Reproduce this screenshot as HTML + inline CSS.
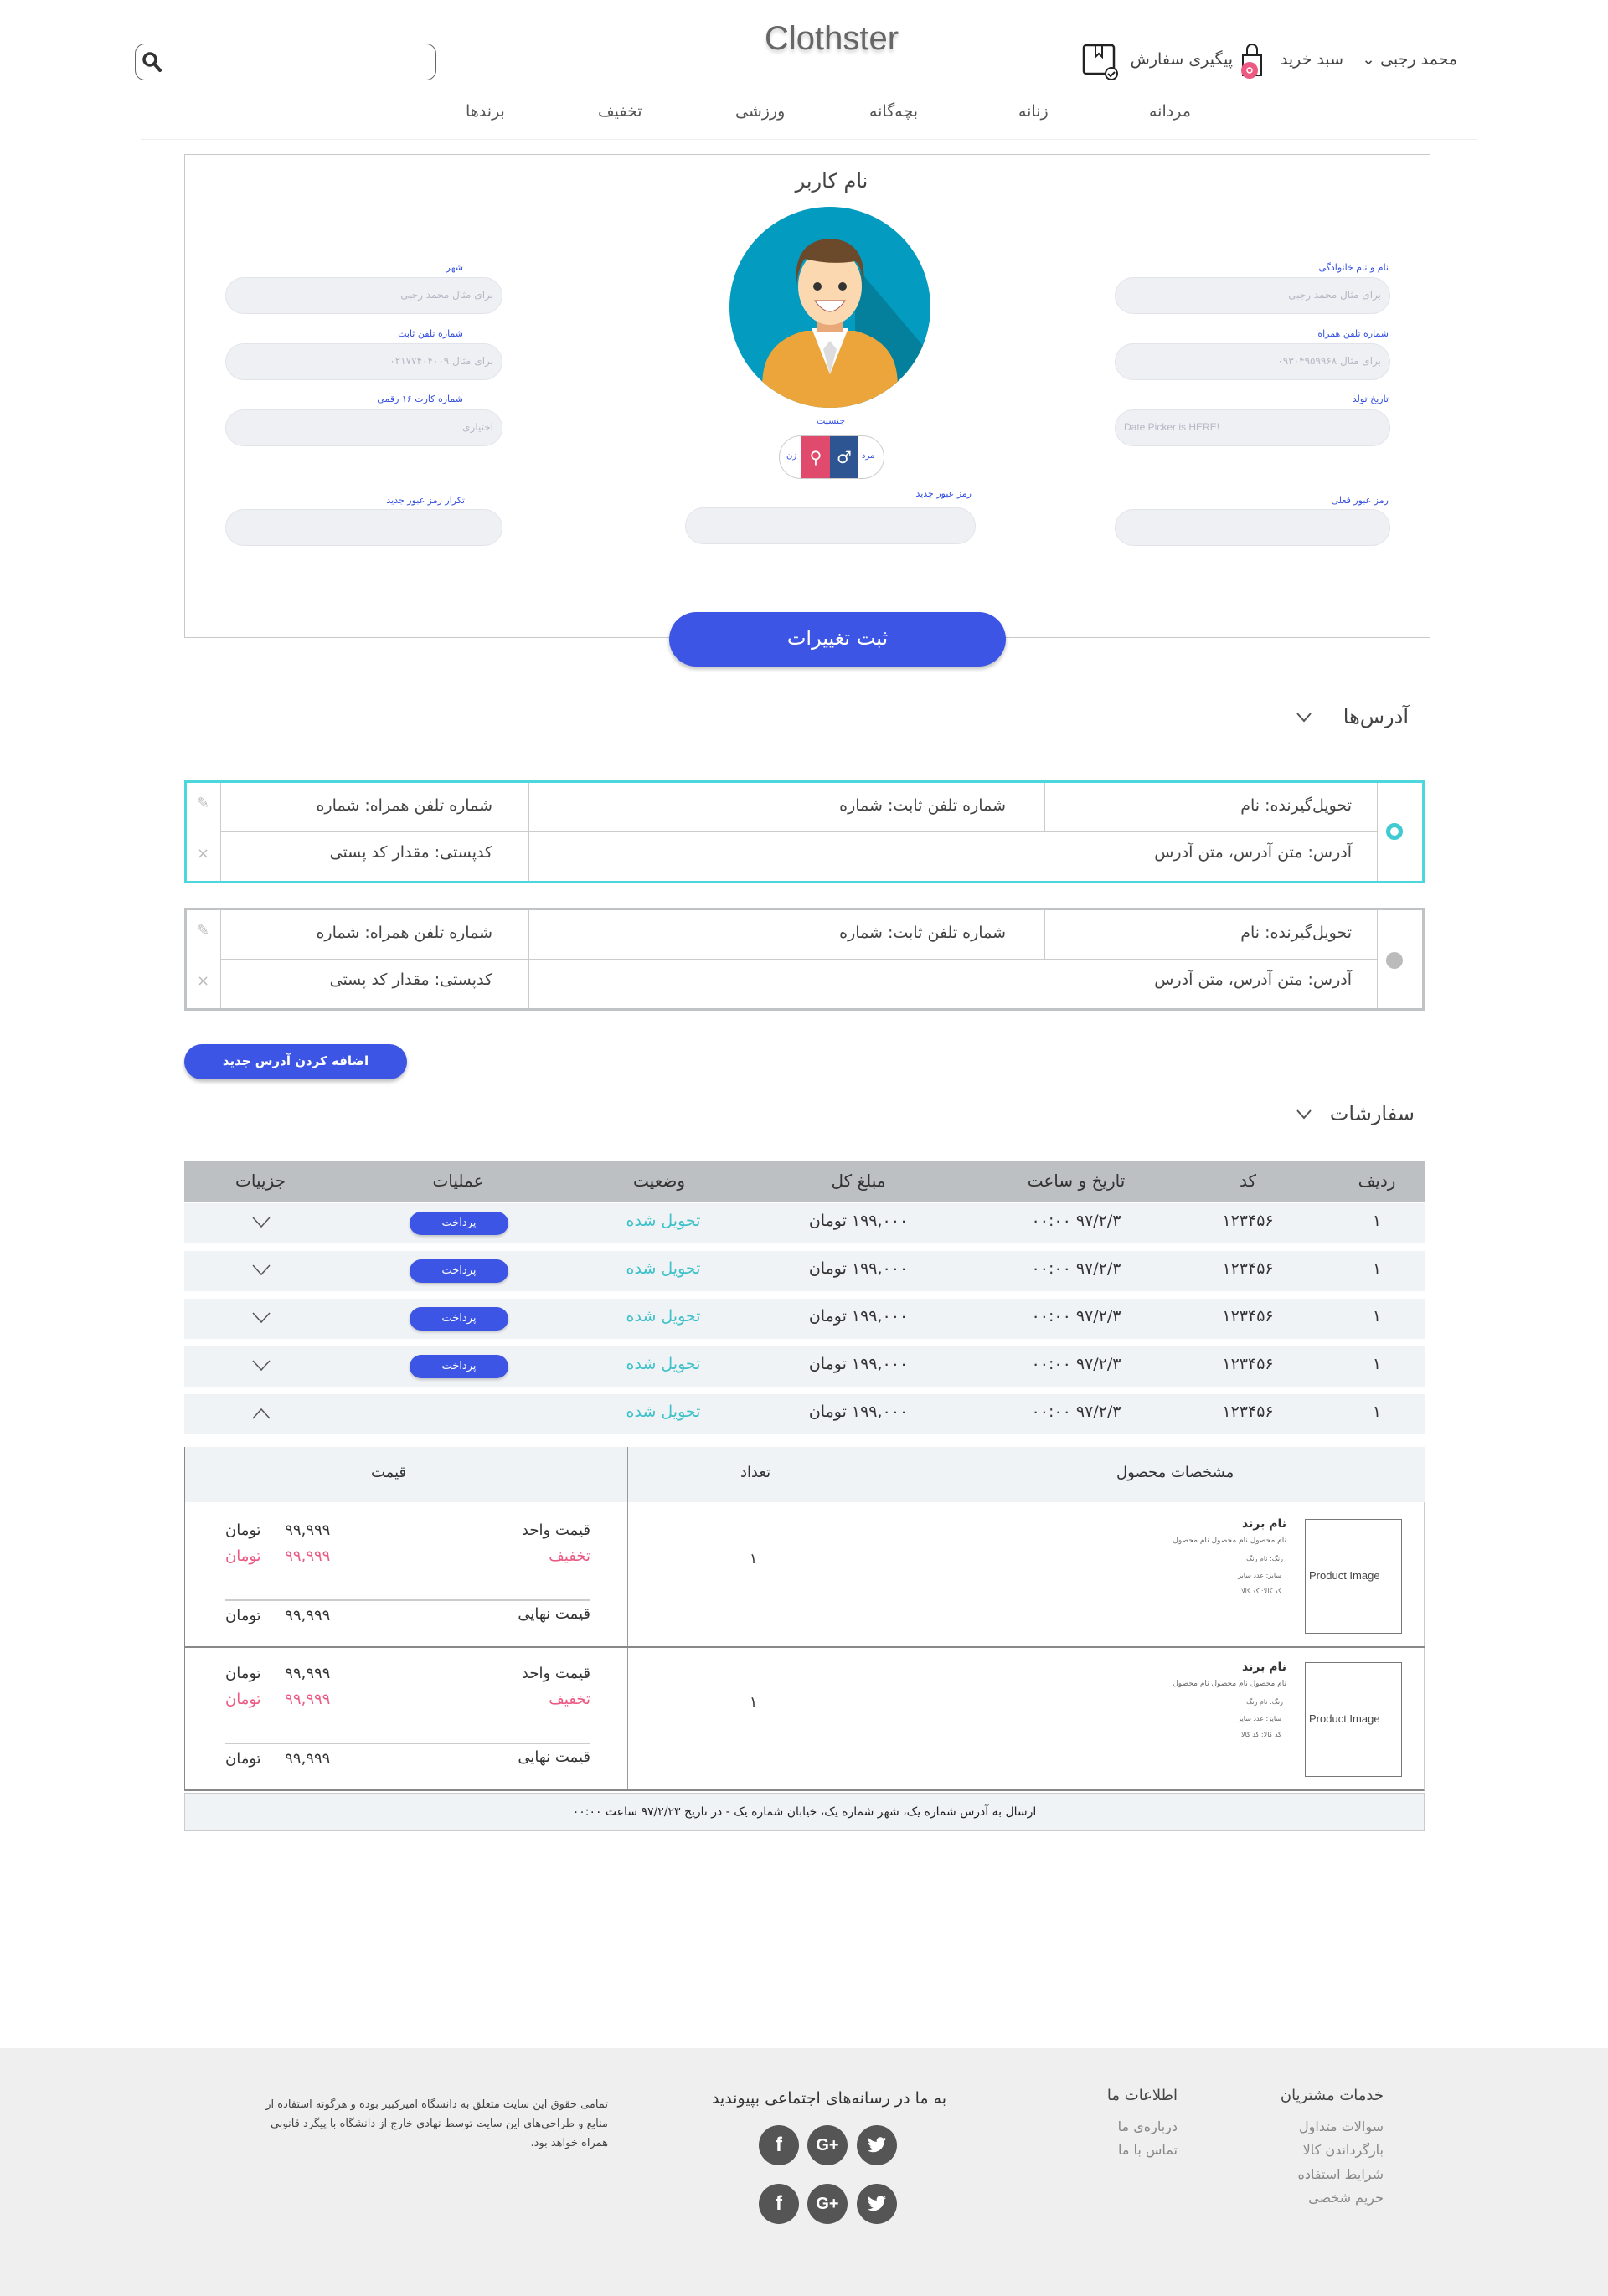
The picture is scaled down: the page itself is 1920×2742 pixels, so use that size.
<!DOCTYPE html>
<html lang="fa"><head><meta charset="utf-8">
<style>
*{box-sizing:border-box;margin:0;padding:0}
body{width:1920px;height:2742px;position:relative;background:#fff;font-family:"DejaVu Sans","Liberation Sans",sans-serif;color:#333;overflow:hidden}
.a{position:absolute}
.t{position:absolute;white-space:nowrap}
.r{direction:rtl}
.inp{position:absolute;height:44px;border:1px solid #e2e4ea;background:#eff0f4;border-radius:22px;font-size:12px;color:#b5b8c4;direction:rtl;padding:13px 10px 0}
.lbl{position:absolute;font-size:11px;color:#3550e0;direction:rtl;white-space:nowrap}
.card{position:absolute;left:220px;width:1481px;height:123px;border:3px solid #4dd6dc;background:#fff}
.card.g{border-color:#bfc3c6}
.card .c{position:absolute;font-size:19px;color:#444;direction:rtl;white-space:nowrap}
.vl{position:absolute;width:1px;background:#ccc}
.hl{position:absolute;height:1px;background:#ccc}
.row{position:absolute;left:220px;width:1481px;height:48px;background:#f0f3f6;font-size:19px;color:#333}
.row .t{top:10px;transform:translateX(-50%)}
.pay{position:absolute;width:118px;height:28px;border-radius:14px;background:#3d55e4;color:#fff;font-size:13px;text-align:center;line-height:28px;top:10px;box-shadow:0 2px 3px rgba(0,0,0,.2)}
.soc{position:absolute;width:48px;height:48px;border-radius:50%;background:#555;color:#fff;font-weight:bold;text-align:center;line-height:48px;font-size:24px;font-family:"Liberation Sans",sans-serif}
.soc svg{position:absolute;left:12px;top:13px}
</style></head><body>

<!-- header -->
<div class="a" style="left:161px;top:52px;width:360px;height:44px;border:1.5px solid #666;border-radius:12px"></div>
<svg class="a" style="left:168px;top:60px" width="28" height="28" viewBox="0 0 28 28"><circle cx="11" cy="11" r="7" fill="none" stroke="#333" stroke-width="3.5"/><line x1="16" y1="16" x2="23" y2="24" stroke="#333" stroke-width="4" stroke-linecap="round"/></svg>
<div class="t" style="left:0;width:1986px;text-align:center;top:24px;font-size:40px;color:#666;font-family:'Liberation Sans',sans-serif;text-shadow:0 3px 4px rgba(0,0,0,.2)">Clothster</div>
<div class="t r" style="right:180px;top:60px;font-size:19px;color:#444">محمد رجبی ⌄</div>
<div class="t r" style="right:316px;top:60px;font-size:19px;color:#444">سبد خرید</div>
<svg class="a" style="left:1478px;top:52px" width="32" height="44" viewBox="0 0 32 44"><rect x="6" y="14" width="22" height="24" fill="none" stroke="#222" stroke-width="2"/><path d="M11 14 V7 a6 6 0 0 1 12 0 V14" fill="none" stroke="#222" stroke-width="2"/><circle cx="14" cy="32" r="10" fill="#ec5a84"/><circle cx="14" cy="32" r="3" fill="none" stroke="#fff" stroke-width="1.5"/></svg>
<div class="t r" style="right:448px;top:60px;font-size:19px;color:#444">پیگیری سفارش</div>
<svg class="a" style="left:1292px;top:52px" width="44" height="44" viewBox="0 0 44 44"><rect x="2" y="2" width="36" height="34" rx="3" fill="none" stroke="#222" stroke-width="2.5"/><path d="M16 2 V16 L20 12 L24 16 V2" fill="none" stroke="#222" stroke-width="2"/><circle cx="35" cy="36" r="7" fill="#fff" stroke="#222" stroke-width="2"/><path d="M31 36 l3 3 l5-5" fill="none" stroke="#222" stroke-width="2"/></svg>

<div class="t r" style="left:1372px;top:122px;font-size:19px;color:#555">مردانه</div>
<div class="t r" style="left:1216px;top:122px;font-size:19px;color:#555">زنانه</div>
<div class="t r" style="left:1038px;top:122px;font-size:19px;color:#555">بچه‌گانه</div>
<div class="t r" style="left:878px;top:122px;font-size:19px;color:#555">ورزشی</div>
<div class="t r" style="left:714px;top:122px;font-size:19px;color:#555">تخفیف</div>
<div class="t r" style="left:556px;top:122px;font-size:19px;color:#555">برندها</div>
<div class="a" style="left:168px;top:166px;width:1595px;height:1px;background:#eee"></div>

<!-- profile box -->
<div class="a" style="left:220px;top:184px;width:1488px;height:578px;border:1.5px solid #c8c8c8"></div>
<div class="t r" style="left:0;width:1986px;text-align:center;top:202px;font-size:24px;color:#444">نام کاربر</div>
<svg class="a" style="left:871px;top:247px" width="240" height="240" viewBox="0 0 240 240">
<defs><clipPath id="cp"><circle cx="120" cy="120" r="120"/></clipPath></defs>
<circle cx="120" cy="120" r="120" fill="#039bbf"/>
<g clip-path="url(#cp)">
<path d="M150 70 L260 200 L240 260 L150 260 Z" fill="#04809c"/>
<path d="M40 200 Q45 160 90 148 L150 148 Q195 160 200 200 L205 250 L35 250 Z" fill="#eca53a"/>
<path d="M98 145 L120 200 L142 145 Z" fill="#fff"/>
<path d="M112 170 L120 200 L128 170 L120 160Z" fill="#ddd"/>
<rect x="105" y="120" width="30" height="30" fill="#e8a878"/>
<ellipse cx="120" cy="95" rx="38" ry="46" fill="#fbd8b0"/>
<path d="M80 95 Q75 40 120 38 Q165 40 160 95 Q158 70 150 65 Q120 70 90 62 Q82 72 80 95Z" fill="#6b4a2b"/>
<circle cx="105" cy="95" r="5" fill="#333"/><circle cx="135" cy="95" r="5" fill="#333"/>
<path d="M102 112 Q120 138 138 112 Z" fill="#fff" stroke="#a55" stroke-width="1"/>
</g></svg>

<div class="lbl" style="right:1367px;top:313px">شهر</div>
<div class="inp" style="left:269px;top:331px;width:331px">برای مثال محمد رجبی</div>
<div class="lbl" style="right:1367px;top:392px">شماره تلفن ثابت</div>
<div class="inp" style="left:269px;top:410px;width:331px">برای مثال ۰۲۱۷۷۴۰۴۰۰۹</div>
<div class="lbl" style="right:1367px;top:470px">شماره کارت ۱۶ رقمی</div>
<div class="inp" style="left:269px;top:489px;width:331px">اختیاری</div>

<div class="lbl" style="right:262px;top:313px">نام و نام خانوادگی</div>
<div class="inp" style="left:1331px;top:331px;width:329px">برای مثال محمد رجبی</div>
<div class="lbl" style="right:262px;top:392px">شماره تلفن همراه</div>
<div class="inp" style="left:1331px;top:410px;width:329px">برای مثال ۰۹۳۰۴۹۵۹۹۶۸</div>
<div class="lbl" style="right:262px;top:470px">تاریخ تولد</div>
<div class="inp" style="left:1331px;top:489px;width:329px;direction:ltr;text-align:left;font-family:'Liberation Sans',sans-serif">Date Picker is HERE!</div>

<div class="lbl" style="left:975px;top:496px">جنسیت</div>
<div class="a" style="left:930px;top:520px;width:126px;height:52px;border:1px solid #ccc;border-radius:26px;background:#fff;overflow:hidden">
<div class="a" style="left:26px;top:0;width:34px;height:52px;background:#e04a6c;color:#fff;text-align:center;line-height:50px;font-size:20px">⚲</div>
<div class="a" style="left:60px;top:0;width:34px;height:52px;background:#2d5592;color:#fff;text-align:center;line-height:50px;font-size:20px">♂</div>
<div class="t" style="left:8px;top:18px;font-size:10px;color:#3550e0">زن</div>
<div class="t" style="left:98px;top:18px;font-size:10px;color:#3550e0">مرد</div>
</div>

<div class="lbl" style="right:1365px;top:591px">تکرار رمز عبور جدید</div>
<div class="inp" style="left:269px;top:608px;width:331px"></div>
<div class="lbl" style="right:760px;top:583px">رمز عبور جدید</div>
<div class="inp" style="left:818px;top:606px;width:347px"></div>
<div class="lbl" style="right:262px;top:591px">رمز عبور فعلی</div>
<div class="inp" style="left:1331px;top:608px;width:329px"></div>

<div class="a r" style="left:799px;top:731px;width:402px;height:65px;border-radius:33px;background:#3d55e4;color:#fff;font-size:24px;text-align:center;line-height:62px;box-shadow:0 3px 5px rgba(0,0,0,.25)">ثبت تغییرات</div>

<!-- addresses -->
<div class="t r" style="right:238px;top:842px;font-size:24px;color:#444">آدرس‌ها</div>
<svg class="a" style="left:1547px;top:850px" width="20" height="14"><path d="M2 2 L10 11 L18 2" fill="none" stroke="#555" stroke-width="2"/></svg>

<div class="card" style="top:932px">
 <div class="vl" style="left:40px;top:0;height:117px"></div>
 <div class="vl" style="left:408px;top:0;height:117px"></div>
 <div class="vl" style="left:1024px;top:0;height:58px"></div>
 <div class="vl" style="left:1421px;top:0;height:117px"></div>
 <div class="hl" style="left:40px;top:58px;width:1381px"></div>
 <div class="a" style="left:1432px;top:48px;width:20px;height:20px;border-radius:50%;border:5px solid #3fcbd1;background:#fff"></div>
 <div class="c" style="right:84px;top:16px">تحویل‌گیرنده: نام</div>
 <div class="c" style="right:84px;top:72px">آدرس: متن آدرس، متن آدرس</div>
 <div class="c" style="right:497px;top:16px">شماره تلفن ثابت: شماره</div>
 <div class="c" style="right:1110px;top:16px">شماره تلفن همراه: شماره</div>
 <div class="c" style="right:1110px;top:72px">کدپستی: مقدار کد پستی</div>
 <div class="t" style="left:12px;top:14px;color:#bbb;font-size:18px">✎</div>
 <div class="t" style="left:12px;top:74px;color:#bbb;font-size:18px">×</div>
</div>
<div class="card g" style="top:1084px">
 <div class="vl" style="left:40px;top:0;height:117px"></div>
 <div class="vl" style="left:408px;top:0;height:117px"></div>
 <div class="vl" style="left:1024px;top:0;height:58px"></div>
 <div class="vl" style="left:1421px;top:0;height:117px"></div>
 <div class="hl" style="left:40px;top:58px;width:1381px"></div>
 <div class="a" style="left:1432px;top:50px;width:20px;height:20px;border-radius:50%;background:#bbb"></div>
 <div class="c" style="right:84px;top:16px">تحویل‌گیرنده: نام</div>
 <div class="c" style="right:84px;top:72px">آدرس: متن آدرس، متن آدرس</div>
 <div class="c" style="right:497px;top:16px">شماره تلفن ثابت: شماره</div>
 <div class="c" style="right:1110px;top:16px">شماره تلفن همراه: شماره</div>
 <div class="c" style="right:1110px;top:72px">کدپستی: مقدار کد پستی</div>
 <div class="t" style="left:12px;top:14px;color:#bbb;font-size:18px">✎</div>
 <div class="t" style="left:12px;top:74px;color:#bbb;font-size:18px">×</div>
</div>

<div class="a r" style="left:220px;top:1247px;width:266px;height:42px;border-radius:21px;background:#3d55e4;color:#fff;font-size:15px;font-weight:bold;text-align:center;line-height:40px;box-shadow:0 3px 4px rgba(0,0,0,.25)">اضافه کردن آدرس جدید</div>

<!-- orders -->
<div class="t r" style="right:231px;top:1316px;font-size:24px;color:#444">سفارشات</div>
<svg class="a" style="left:1547px;top:1324px" width="20" height="14"><path d="M2 2 L10 11 L18 2" fill="none" stroke="#555" stroke-width="2"/></svg>

<div class="a" style="left:220px;top:1387px;width:1481px;height:49px;background:#bdc0c2;font-size:20px;color:#333">
 <div class="t" style="left:1424px;top:11px;transform:translateX(-50%)">ردیف</div>
 <div class="t" style="left:1270px;top:11px;transform:translateX(-50%)">کد</div>
 <div class="t" style="left:1065px;top:11px;transform:translateX(-50%)">تاریخ و ساعت</div>
 <div class="t" style="left:805px;top:11px;transform:translateX(-50%)">مبلغ کل</div>
 <div class="t" style="left:567px;top:11px;transform:translateX(-50%)">وضعیت</div>
 <div class="t" style="left:327px;top:11px;transform:translateX(-50%)">عملیات</div>
 <div class="t" style="left:91px;top:11px;transform:translateX(-50%)">جزییات</div>
</div>

<div class="row" style="top:1437px"><div class="t" style="left:1424px">۱</div><div class="t" style="left:1270px">۱۲۳۴۵۶</div><div class="t" style="left:1065px">۰۰:۰۰ ۹۷/۲/۳</div><div class="t r" style="left:805px">۱۹۹,۰۰۰ تومان</div><div class="t r" style="left:572px;color:#3ec1c9">تحویل شده</div><div class="pay r" style="left:269px">پرداخت</div><svg class="a" style="left:81px;top:16px" width="22" height="14"><path d="M1 1 L11 12 L21 1" fill="none" stroke="#555" stroke-width="1.5"/></svg></div>
<div class="row" style="top:1494px"><div class="t" style="left:1424px">۱</div><div class="t" style="left:1270px">۱۲۳۴۵۶</div><div class="t" style="left:1065px">۰۰:۰۰ ۹۷/۲/۳</div><div class="t r" style="left:805px">۱۹۹,۰۰۰ تومان</div><div class="t r" style="left:572px;color:#3ec1c9">تحویل شده</div><div class="pay r" style="left:269px">پرداخت</div><svg class="a" style="left:81px;top:16px" width="22" height="14"><path d="M1 1 L11 12 L21 1" fill="none" stroke="#555" stroke-width="1.5"/></svg></div>
<div class="row" style="top:1551px"><div class="t" style="left:1424px">۱</div><div class="t" style="left:1270px">۱۲۳۴۵۶</div><div class="t" style="left:1065px">۰۰:۰۰ ۹۷/۲/۳</div><div class="t r" style="left:805px">۱۹۹,۰۰۰ تومان</div><div class="t r" style="left:572px;color:#3ec1c9">تحویل شده</div><div class="pay r" style="left:269px">پرداخت</div><svg class="a" style="left:81px;top:16px" width="22" height="14"><path d="M1 1 L11 12 L21 1" fill="none" stroke="#555" stroke-width="1.5"/></svg></div>
<div class="row" style="top:1608px"><div class="t" style="left:1424px">۱</div><div class="t" style="left:1270px">۱۲۳۴۵۶</div><div class="t" style="left:1065px">۰۰:۰۰ ۹۷/۲/۳</div><div class="t r" style="left:805px">۱۹۹,۰۰۰ تومان</div><div class="t r" style="left:572px;color:#3ec1c9">تحویل شده</div><div class="pay r" style="left:269px">پرداخت</div><svg class="a" style="left:81px;top:16px" width="22" height="14"><path d="M1 1 L11 12 L21 1" fill="none" stroke="#555" stroke-width="1.5"/></svg></div>
<div class="row" style="top:1665px"><div class="t" style="left:1424px">۱</div><div class="t" style="left:1270px">۱۲۳۴۵۶</div><div class="t" style="left:1065px">۰۰:۰۰ ۹۷/۲/۳</div><div class="t r" style="left:805px">۱۹۹,۰۰۰ تومان</div><div class="t r" style="left:572px;color:#3ec1c9">تحویل شده</div><svg class="a" style="left:81px;top:16px" width="22" height="14"><path d="M1 13 L11 2 L21 13" fill="none" stroke="#555" stroke-width="1.5"/></svg></div>

<!-- detail -->
<div class="a" style="left:220px;top:1728px;width:1481px;height:411px;border-left:1px solid #888;border-right:1px solid #ccc;border-bottom:2px solid #888">
 <div class="a" style="left:0;top:0;width:1480px;height:66px;background:#f0f3f6"></div>
 <div class="vl" style="left:528px;top:0;height:409px;background:#999"></div>
 <div class="vl" style="left:834px;top:0;height:409px;background:#999"></div>
 <div class="a" style="left:0;top:238px;width:1480px;height:2px;background:#888"></div>
 <div class="t r" style="left:1112px;top:20px;font-size:18px">مشخصات محصول</div>
 <div class="t r" style="left:663px;top:20px;font-size:18px">تعداد</div>
 <div class="t r" style="left:222px;top:20px;font-size:18px">قیمت</div>
</div>
<div class="a" style="left:1558px;top:1814px;width:116px;height:137px;border:1.5px solid #777;font-family:'Liberation Sans',sans-serif;font-size:13px;color:#444;padding-top:59px;padding-left:4px">Product Image</div>
<div class="t r" style="right:384px;top:1812px;font-size:14px;font-weight:bold">نام برند</div>
<div class="t r" style="right:384px;top:1835px;font-size:9px;color:#666">نام محصول نام محصول نام محصول</div>
<div class="t r" style="right:388px;top:1857px;font-size:8px;color:#666">رنگ: نام رنگ</div>
<div class="t r" style="right:390px;top:1877px;font-size:8px;color:#666">سایز: عدد سایز</div>
<div class="t r" style="right:390px;top:1896px;font-size:8px;color:#666">کد کالا: کد کالا</div>
<div class="t" style="left:895px;top:1852px;font-size:17px">۱</div>
<div class="t r" style="right:1215px;top:1817px;font-size:18px">قیمت واحد</div>
<div class="t r" style="right:1215px;top:1848px;font-size:18px;color:#ec5a84">تخفیف</div>
<div class="t r" style="right:1215px;top:1917px;font-size:18px">قیمت نهایی</div>
<div class="t r" style="left:269px;top:1817px;font-size:18px">۹۹,۹۹۹&nbsp;&nbsp;&nbsp;&nbsp;&nbsp;تومان</div>
<div class="t r" style="left:269px;top:1848px;font-size:18px;color:#ec5a84">۹۹,۹۹۹&nbsp;&nbsp;&nbsp;&nbsp;&nbsp;تومان</div>
<div class="t r" style="left:269px;top:1919px;font-size:18px">۹۹,۹۹۹&nbsp;&nbsp;&nbsp;&nbsp;&nbsp;تومان</div>
<div class="a" style="left:269px;top:1910px;width:436px;height:2px;background:#ccc"></div>

<div class="a" style="left:1558px;top:1985px;width:116px;height:137px;border:1.5px solid #777;font-family:'Liberation Sans',sans-serif;font-size:13px;color:#444;padding-top:59px;padding-left:4px">Product Image</div>
<div class="t r" style="right:384px;top:1983px;font-size:14px;font-weight:bold">نام برند</div>
<div class="t r" style="right:384px;top:2006px;font-size:9px;color:#666">نام محصول نام محصول نام محصول</div>
<div class="t r" style="right:388px;top:2028px;font-size:8px;color:#666">رنگ: نام رنگ</div>
<div class="t r" style="right:390px;top:2048px;font-size:8px;color:#666">سایز: عدد سایز</div>
<div class="t r" style="right:390px;top:2067px;font-size:8px;color:#666">کد کالا: کد کالا</div>
<div class="t" style="left:895px;top:2023px;font-size:17px">۱</div>
<div class="t r" style="right:1215px;top:1988px;font-size:18px">قیمت واحد</div>
<div class="t r" style="right:1215px;top:2019px;font-size:18px;color:#ec5a84">تخفیف</div>
<div class="t r" style="right:1215px;top:2088px;font-size:18px">قیمت نهایی</div>
<div class="t r" style="left:269px;top:1988px;font-size:18px">۹۹,۹۹۹&nbsp;&nbsp;&nbsp;&nbsp;&nbsp;تومان</div>
<div class="t r" style="left:269px;top:2019px;font-size:18px;color:#ec5a84">۹۹,۹۹۹&nbsp;&nbsp;&nbsp;&nbsp;&nbsp;تومان</div>
<div class="t r" style="left:269px;top:2090px;font-size:18px">۹۹,۹۹۹&nbsp;&nbsp;&nbsp;&nbsp;&nbsp;تومان</div>
<div class="a" style="left:269px;top:2081px;width:436px;height:2px;background:#ccc"></div>

<div class="a r" style="left:220px;top:2141px;width:1481px;height:46px;background:#f0f3f6;border:1px solid #ccc;text-align:center;font-size:14px;line-height:44px;color:#222">ارسال به آدرس شماره یک، شهر شماره یک، خیابان شماره یک - در تاریخ ۹۷/۲/۲۳ ساعت ۰۰:۰۰</div>

<!-- footer -->
<div class="a" style="left:0;top:2446px;width:1920px;height:296px;background:#efefef"></div>
<div class="t r" style="right:268px;top:2492px;font-size:18px;color:#444">خدمات مشتریان</div>
<div class="t r" style="right:268px;top:2530px;font-size:16px;color:#888">سوالات متداول</div>
<div class="t r" style="right:268px;top:2558px;font-size:16px;color:#888">بازگرداندن کالا</div>
<div class="t r" style="right:268px;top:2587px;font-size:16px;color:#888">شرایط استفاده</div>
<div class="t r" style="right:268px;top:2615px;font-size:16px;color:#888">حریم شخصی</div>
<div class="t r" style="right:514px;top:2492px;font-size:18px;color:#444">اطلاعات ما</div>
<div class="t r" style="right:514px;top:2530px;font-size:16px;color:#888">درباره‌ی ما</div>
<div class="t r" style="right:514px;top:2558px;font-size:16px;color:#888">تماس با ما</div>
<div class="t r" style="left:0;width:1980px;text-align:center;top:2495px;font-size:19px;color:#333">به ما در رسانه‌های اجتماعی بپیوندید</div>
<div class="soc" style="left:906px;top:2538px">f</div><div class="soc" style="left:964px;top:2538px;font-size:20px">G+</div>
<div class="soc" style="left:1023px;top:2538px"><svg width="24" height="22" viewBox="0 0 24 20"><path d="M23 2.5c-.8.4-1.7.6-2.6.7.9-.6 1.6-1.4 2-2.5-.9.5-1.9.9-2.9 1.1A4.5 4.5 0 0 0 11.8 6 12.8 12.8 0 0 1 2.5 1.3a4.5 4.5 0 0 0 1.4 6c-.7 0-1.4-.2-2-.6 0 2.2 1.6 4 3.6 4.4-.7.2-1.4.2-2 .1.6 1.8 2.2 3.1 4.2 3.1A9 9 0 0 1 1 16.2 12.8 12.8 0 0 0 20.7 5.4V4.8c.9-.6 1.7-1.4 2.3-2.3z" fill="#fff"/></svg></div>
<div class="soc" style="left:906px;top:2608px">f</div><div class="soc" style="left:964px;top:2608px;font-size:20px">G+</div>
<div class="soc" style="left:1023px;top:2608px"><svg width="24" height="22" viewBox="0 0 24 20"><path d="M23 2.5c-.8.4-1.7.6-2.6.7.9-.6 1.6-1.4 2-2.5-.9.5-1.9.9-2.9 1.1A4.5 4.5 0 0 0 11.8 6 12.8 12.8 0 0 1 2.5 1.3a4.5 4.5 0 0 0 1.4 6c-.7 0-1.4-.2-2-.6 0 2.2 1.6 4 3.6 4.4-.7.2-1.4.2-2 .1.6 1.8 2.2 3.1 4.2 3.1A9 9 0 0 1 1 16.2 12.8 12.8 0 0 0 20.7 5.4V4.8c.9-.6 1.7-1.4 2.3-2.3z" fill="#fff"/></svg></div>
<div class="a r" style="left:300px;top:2502px;width:426px;font-size:13px;color:#444;line-height:23px;text-align:right">تمامی حقوق این سایت متعلق به دانشگاه امیرکبیر بوده و هرگونه استفاده از منابع و طراحی‌های این سایت توسط نهادی خارج از دانشگاه با پیگرد قانونی همراه خواهد بود.</div>
</body></html>
